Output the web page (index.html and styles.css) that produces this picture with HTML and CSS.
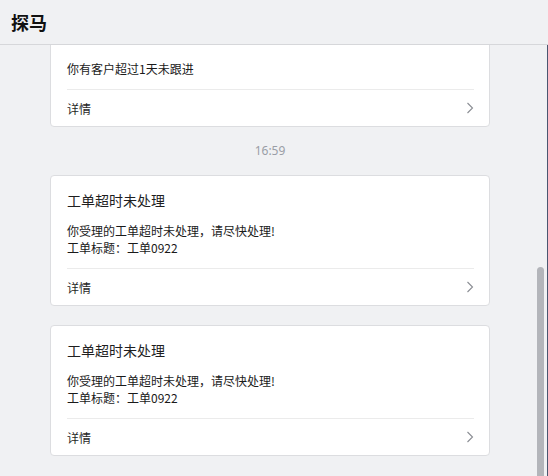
FILE: index.html
```html
<!DOCTYPE html>
<html lang="zh-CN">
<head>
<meta charset="utf-8">
<title>探马</title>
<link rel="stylesheet" href="styles.css">
</head>
<body>
<div class="app">
  <header class="topbar"><h1 class="topbar-title">探马</h1></header>
  <div class="main">
    <main class="scroller">
      <div class="feed">
        <div class="item item-first">
          <div class="card">
            <div class="card-body card-body-cut">
              <div class="card-text card-text-only">你有客户超过1天未跟进</div>
            </div>
            <div class="card-foot"><span>详情</span><svg class="chev" width="8" height="12" viewBox="0 0 8 12"><path d="M1.5 1 L6.5 6 L1.5 11" fill="none" stroke="#8a8d93" stroke-width="1.1"/></svg></div>
          </div>
        </div>
        <div class="item">
          <div class="time">16:59</div>
          <div class="card">
            <div class="card-body">
              <div class="card-title">工单超时未处理</div>
              <div class="card-text">你受理的工单超时未处理，请尽快处理!<br>工单标题：工单0922</div>
            </div>
            <div class="card-foot"><span>详情</span><svg class="chev" width="8" height="12" viewBox="0 0 8 12"><path d="M1.5 1 L6.5 6 L1.5 11" fill="none" stroke="#8a8d93" stroke-width="1.1"/></svg></div>
          </div>
        </div>
        <div class="item item-notime">
          <div class="card">
            <div class="card-body">
              <div class="card-title">工单超时未处理</div>
              <div class="card-text">你受理的工单超时未处理，请尽快处理!<br>工单标题：工单0922</div>
            </div>
            <div class="card-foot"><span>详情</span><svg class="chev" width="8" height="12" viewBox="0 0 8 12"><path d="M1.5 1 L6.5 6 L1.5 11" fill="none" stroke="#8a8d93" stroke-width="1.1"/></svg></div>
          </div>
        </div>
      </div>
    </main>
    <div class="scrollbar" aria-hidden="true"><div class="thumb"></div></div>
  </div>
</div>
</body>
</html>
```
FILE: styles.css
```css
* { box-sizing: border-box; }
html, body { margin: 0; padding: 0; }
body {
  background: #f0f1f3;
  font-family: "Noto Sans CJK SC", "Noto Sans", sans-serif;
  color: #1f1f1f;
  overflow: hidden;
}
.app {
  height: 476px;
  display: flex;
  flex-direction: column;
}
.topbar {
  height: 45px;
  flex: none;
  border-bottom: 1px solid #d6d7da;
  display: flex;
  align-items: center;
  padding-left: 11px;
  position: relative;
  z-index: 1;
  background: #f0f1f3;
}
.topbar-title {
  margin: 0;
  font-size: 18px;
  font-weight: 700;
  line-height: 24px;
  color: #111;
}
.main {
  flex: 1;
  min-height: 0;
  display: flex;
}
.scroller {
  flex: 1;
  min-width: 0;
  overflow: hidden;
  display: flex;
  flex-direction: column-reverse;
}
.scrollbar {
  width: 11px;
  flex: none;
  display: flex;
  flex-direction: column;
  justify-content: flex-end;
  padding-right: 3px;
  border-right: 1px solid #4a5670;
}
.thumb {
  height: 209px;
  width: 7px;
  background: #b3b5ba;
  border-radius: 4px 4px 0 0;
}
.feed {
  flex: none;
  padding: 0 0 20px 50px;
  display: flex;
  flex-direction: column;
}
.item {
  width: 440px;
  display: flex;
  flex-direction: column;
  padding-top: 14px;
}
.item-notime { padding-top: 19px; }
.item-first { padding-top: 0; }
.time {
  height: 20px;
  line-height: 20px;
  text-align: center;
  font-family: "Noto Sans", "Noto Sans CJK SC", sans-serif;
  font-size: 12px;
  color: #9a9ea6;
  margin-bottom: 14px;
}
.card {
  background: #fff;
  border: 1px solid #dcdde0;
  border-radius: 4px;
  padding: 0 15px 0 16px;
}
.card-body {
  padding: 14px 0 12px;
  border-bottom: 1px solid #ebebeb;
}
.card-body-cut { padding-top: 60px; }
.card-title {
  font-size: 14px;
  line-height: 20px;
  color: #1f1f1f;
}
.card-text {
  margin-top: 12px;
  font-size: 12px;
  line-height: 17px;
  color: #1a1a1a;
}
.card-text-only { margin-top: 0; }
.card-foot {
  height: 36px;
  display: flex;
  align-items: center;
  justify-content: space-between;
  font-size: 12px;
  color: #1f1f1f;
}
```
